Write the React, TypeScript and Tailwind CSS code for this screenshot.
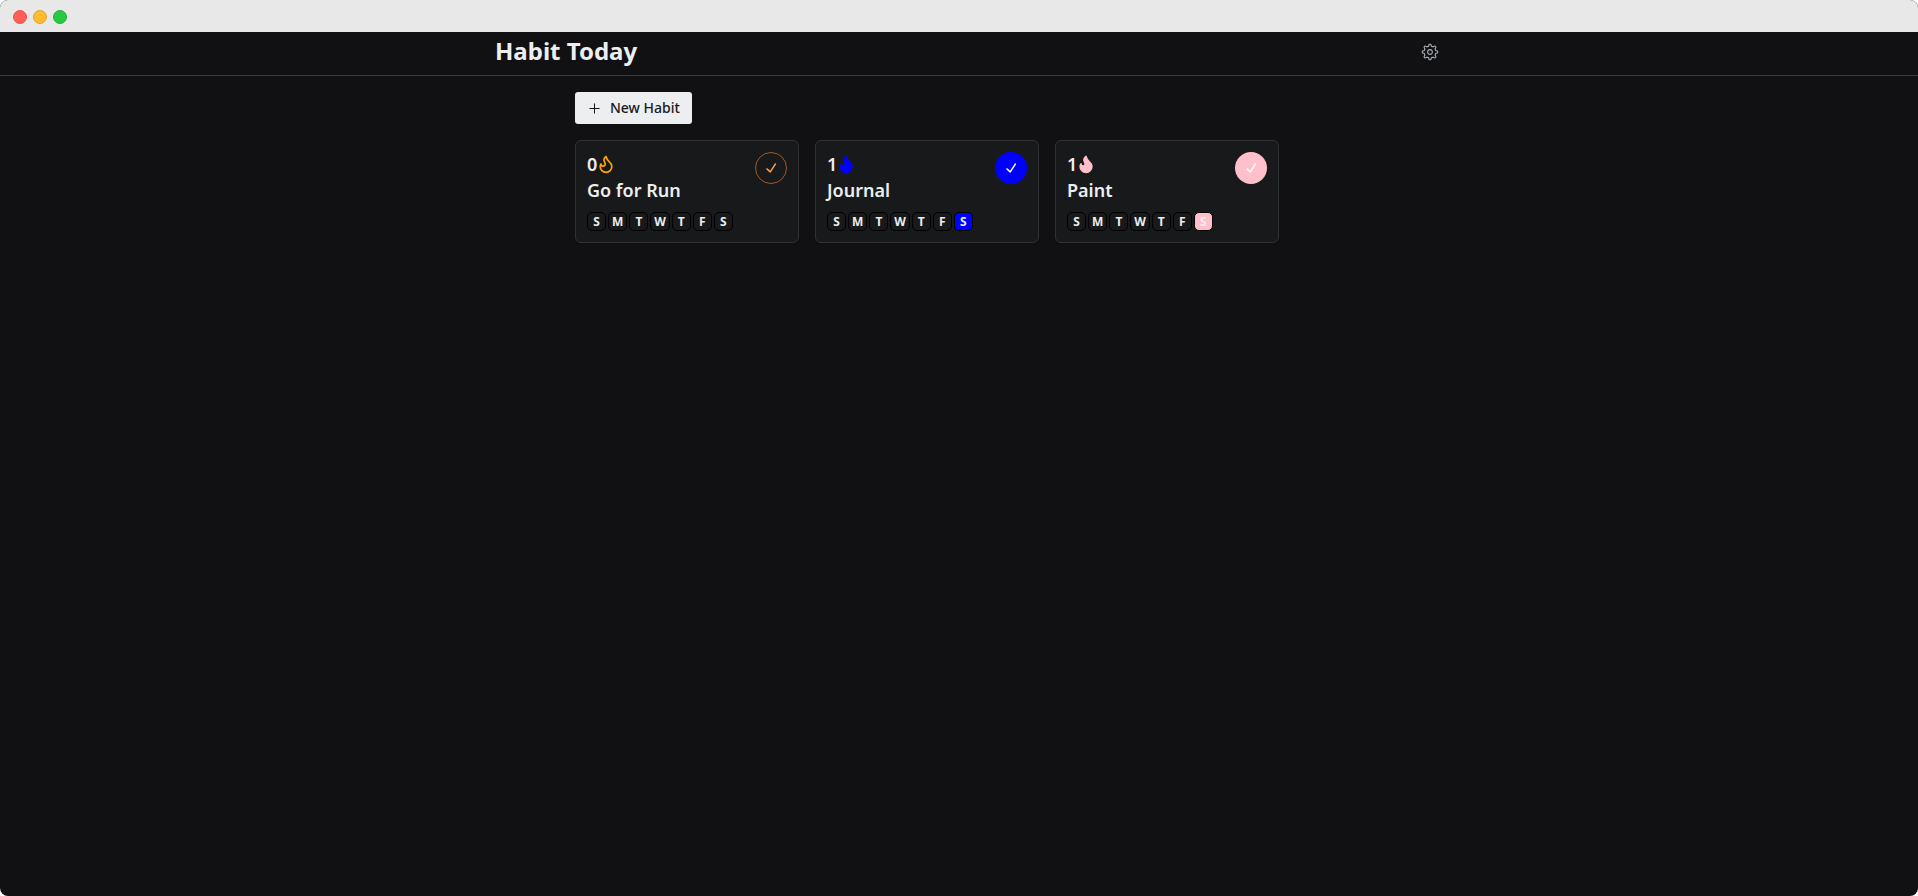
import { Flame } from "lucide-react";
import { RxCheck, RxGear, RxPlus } from "react-icons/rx";

type Habit = {
  name: string;
  streak: number;
  flame: string;
  button: string;
  today: string;
};

const habits: Habit[] = [
  {
    name: "Go for Run",
    streak: 0,
    flame: "fill-none text-[#ffa500]",
    button: "border border-[#a35829] text-[#ffa057]",
    today: "",
  },
  {
    name: "Journal",
    streak: 1,
    flame: "fill-current text-[#0000ff]",
    button: "bg-[#0000ff] text-white",
    today: "bg-[#0000ff]",
  },
  {
    name: "Paint",
    streak: 1,
    flame: "fill-current text-[#ffc0cb]",
    button: "bg-[#ffc0cb] text-white",
    today: "bg-[#ffc0cb]",
  },
];

const days = ["S", "M", "T", "W", "T", "F", "S"];

function HabitCard({ habit }: { habit: Habit }) {
  return (
    <article className="flex w-56 items-start justify-between rounded-md border border-[#2e3135] bg-[#18191b] px-[11px] pt-[10px] pb-[11px]">
      <div>
        <div className="flex h-[26px] items-center text-lg font-semibold">
          <span>{habit.streak}</span>
          <Flame size={20} className={`-ml-px ${habit.flame}`} aria-hidden="true" />
        </div>
        <h2 className="text-lg leading-[26px] font-semibold">{habit.name}</h2>
        <ul className="mt-[9px] grid w-[146px] grid-cols-7 gap-[2px]">
          {days.map((day, i) => (
            <li
              key={i}
              className={`flex h-[19px] items-center justify-center rounded-[5px] border border-black text-xs font-bold ${i === 6 ? habit.today : ""}`}
            >
              {day}
            </li>
          ))}
        </ul>
      </div>
      <button
        type="button"
        aria-label={`Complete ${habit.name}`}
        className={`mt-px flex size-8 items-center justify-center rounded-full ${habit.button}`}
      >
        <RxCheck size={18} />
      </button>
    </article>
  );
}

export default function App() {
  return (
    <div className="min-h-screen bg-white font-['Noto_Sans',sans-serif] text-[#edeef0]">
      <div className="flex min-h-screen flex-col overflow-hidden rounded-lg bg-[#111113]">
        <div className="flex h-8 items-center gap-[6px] bg-[#e8e8e8] px-[13px] pt-[2px]">
          <span className="size-[14px] rounded-full border border-[#e9544c] bg-[#ff5f57]" />
          <span className="size-[14px] rounded-full border border-[#e0a433] bg-[#febc2e]" />
          <span className="size-[14px] rounded-full border border-[#24b03a] bg-[#28c840]" />
        </div>
        <header className="border-b border-[#3a3b3e]">
          <div className="mx-auto flex h-[43px] w-full max-w-[960px] items-center justify-between pb-1 pl-4">
            <h1 className="pb-[2px] text-2xl font-bold">Habit Today</h1>
            <button type="button" aria-label="Settings" className="text-[#b0b4ba]">
              <RxGear size={18} />
            </button>
          </div>
        </header>
        <main className="mx-auto flex w-full max-w-3xl flex-col items-start gap-4 py-4">
          <button
            type="button"
            className="flex h-8 items-center gap-2 rounded-[3px] bg-[#edeef0] px-3 text-sm font-medium text-[#18191b]"
          >
            <RxPlus size={15} />
            New Habit
          </button>
          <section className="flex w-full flex-wrap gap-4">
            {habits.map((habit) => (
              <HabitCard key={habit.name} habit={habit} />
            ))}
          </section>
        </main>
      </div>
    </div>
  );
}
